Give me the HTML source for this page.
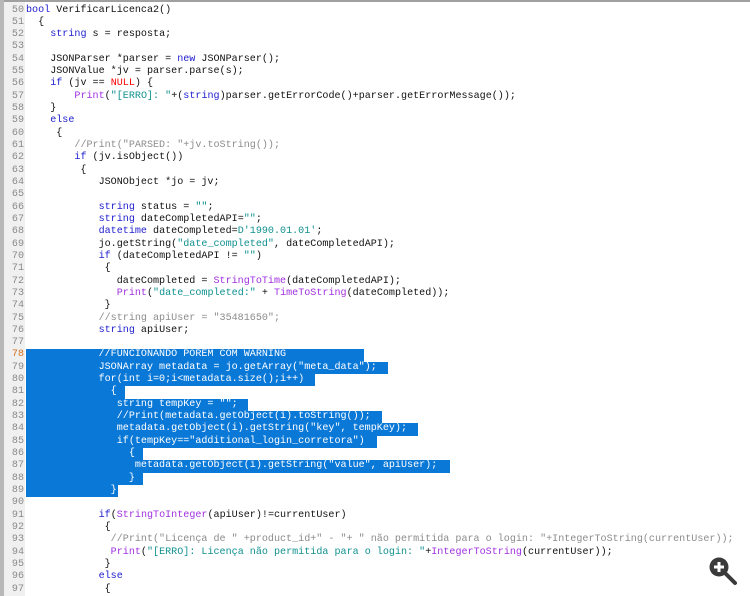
<!DOCTYPE html>
<html><head><meta charset="utf-8"><style>
html,body{margin:0;padding:0;width:750px;height:596px;overflow:hidden;background:#fff;position:relative}
.top{position:absolute;left:0;top:0;width:750px;height:2px;background:#a0a0a0}
.lb{position:absolute;left:0;top:0;width:4px;height:596px;background:#b8b8b8}
.gut{position:absolute;left:4px;top:2px;width:21px;height:594px;background:#f0f0f0}
.w{position:absolute;left:0;top:1.5px;width:750px;height:596px}
.n{position:absolute;left:6px;width:18px;text-align:right;font:10.08px "Liberation Mono",monospace;color:#8a8a8a;height:12.32px;line-height:12.32px}
.l{position:absolute;left:26px;font:10.08px "Liberation Mono",monospace;color:#111;white-space:pre;height:12.32px;line-height:12.32px}
.s{background:#0a78d7;color:#fff;position:absolute;left:0;top:0;height:12.32px}
.k{color:#2020d0}.r{color:#ff0000}.p{color:#a030e0}.c{color:#8c8c8c}.t{color:#109090}
</style></head><body>
<div class="top"></div><div class="lb"></div><div class="gut"></div>
<div class="w">
<div id="g"></div>
<div class="l" style="top:3.00px"><span class="k">bool</span> VerificarLicenca2()</div>
<div class="l" style="top:15.32px">  {</div>
<div class="l" style="top:27.64px">    <span class="k">string</span> s = resposta;</div>
<div class="l" style="top:52.28px">    JSONParser *parser = <span class="k">new</span> JSONParser();</div>
<div class="l" style="top:64.60px">    JSONValue *jv = parser.parse(s);</div>
<div class="l" style="top:76.92px">    <span class="k">if</span> (jv == <span class="r">NULL</span>) {</div>
<div class="l" style="top:89.24px">        <span class="p">Print</span>(<span class="t">"[ERRO]: "</span>+(<span class="k">string</span>)parser.getErrorCode()+parser.getErrorMessage());</div>
<div class="l" style="top:101.56px">    }</div>
<div class="l" style="top:113.88px">    <span class="k">else</span></div>
<div class="l" style="top:126.20px">     {</div>
<div class="l" style="top:138.52px">        <span class="c">//Print("PARSED: "+jv.toString());</span></div>
<div class="l" style="top:150.84px">        <span class="k">if</span> (jv.isObject())</div>
<div class="l" style="top:163.16px">         {</div>
<div class="l" style="top:175.48px">            JSONObject *jo = jv;</div>
<div class="l" style="top:200.12px">            <span class="k">string</span> status = <span class="t">""</span>;</div>
<div class="l" style="top:212.44px">            <span class="k">string</span> dateCompletedAPI=<span class="t">""</span>;</div>
<div class="l" style="top:224.76px">            <span class="k">datetime</span> dateCompleted=<span class="t">D'1990.01.01'</span>;</div>
<div class="l" style="top:237.08px">            jo.getString(<span class="t">"date_completed"</span>, dateCompletedAPI);</div>
<div class="l" style="top:249.40px">            <span class="k">if</span> (dateCompletedAPI != <span class="t">""</span>)</div>
<div class="l" style="top:261.72px">             {</div>
<div class="l" style="top:274.04px">               dateCompleted = <span class="p">StringToTime</span>(dateCompletedAPI);</div>
<div class="l" style="top:286.36px">               <span class="p">Print</span>(<span class="t">"date_completed:"</span> + <span class="p">TimeToString</span>(dateCompleted));</div>
<div class="l" style="top:298.68px">             }</div>
<div class="l" style="top:311.00px">            <span class="c">//string apiUser = "35481650";</span></div>
<div class="l" style="top:323.32px">            <span class="k">string</span> apiUser;</div>
<div class="l" style="top:347.96px"><span class="s" style="width:338px"></span><span style="position:relative;color:#fff">            //FUNCIONANDO POREM COM WARNING</span></div>
<div class="l" style="top:360.28px"><span class="s" style="width:362px"></span><span style="position:relative;color:#fff">            JSONArray metadata = jo.getArray("meta_data");</span></div>
<div class="l" style="top:372.60px"><span class="s" style="width:289px"></span><span style="position:relative;color:#fff">            for(int i=0;i&lt;metadata.size();i++)</span></div>
<div class="l" style="top:384.92px"><span class="s" style="width:99px"></span><span style="position:relative;color:#fff">              {</span></div>
<div class="l" style="top:397.24px"><span class="s" style="width:222px"></span><span style="position:relative;color:#fff">               string tempKey = "";</span></div>
<div class="l" style="top:409.56px"><span class="s" style="width:356px"></span><span style="position:relative;color:#fff">               //Print(metadata.getObject(i).toString());</span></div>
<div class="l" style="top:421.88px"><span class="s" style="width:392px"></span><span style="position:relative;color:#fff">               metadata.getObject(i).getString("key", tempKey);</span></div>
<div class="l" style="top:434.20px"><span class="s" style="width:351px"></span><span style="position:relative;color:#fff">               if(tempKey=="additional_login_corretora")</span></div>
<div class="l" style="top:446.52px"><span class="s" style="width:117px"></span><span style="position:relative;color:#fff">                 {</span></div>
<div class="l" style="top:458.84px"><span class="s" style="width:424px"></span><span style="position:relative;color:#fff">                  metadata.getObject(i).getString("value", apiUser);</span></div>
<div class="l" style="top:471.16px"><span class="s" style="width:117px"></span><span style="position:relative;color:#fff">                 }</span></div>
<div class="l" style="top:483.48px"><span class="s" style="width:92px"></span><span style="position:relative;color:#fff">              }</span></div>
<div class="l" style="top:508.12px">            <span class="k">if</span>(<span class="p">StringToInteger</span>(apiUser)!=currentUser)</div>
<div class="l" style="top:520.44px">             {</div>
<div class="l" style="top:532.76px">              <span class="c">//Print("Licença de " +product_id+" - "+ " não permitida para o login: "+IntegerToString(currentUser));</span></div>
<div class="l" style="top:545.08px">              <span class="p">Print</span>(<span class="t">"[ERRO]: Licença não permitida para o login: "</span>+<span class="p">IntegerToString</span>(currentUser));</div>
<div class="l" style="top:557.40px">             }</div>
<div class="l" style="top:569.72px">            <span class="k">else</span></div>
<div class="l" style="top:582.04px">             {</div>
</div>
<svg style="position:absolute;left:708px;top:556px" width="30" height="30" viewBox="0 0 30 30">
<line x1="17" y1="17" x2="27" y2="27" stroke="#3a3a3a" stroke-width="4" stroke-linecap="round"/>
<circle cx="11" cy="11" r="9.5" fill="#3a3a3a"/>
<rect x="6" y="9.5" width="10" height="3" fill="#fff"/><rect x="9.5" y="6" width="3" height="10" fill="#fff"/>
</svg>
<script>
var g=document.getElementById('g'),h='';
for(var i=50;i<=97;i++){h+='<div class="n" style="top:'+(3+(i-50)*12.32)+'px;'+(i==78?'color:#d07020':'')+'">'+i+'</div>';}
g.innerHTML=h;
</script>
</body></html>
